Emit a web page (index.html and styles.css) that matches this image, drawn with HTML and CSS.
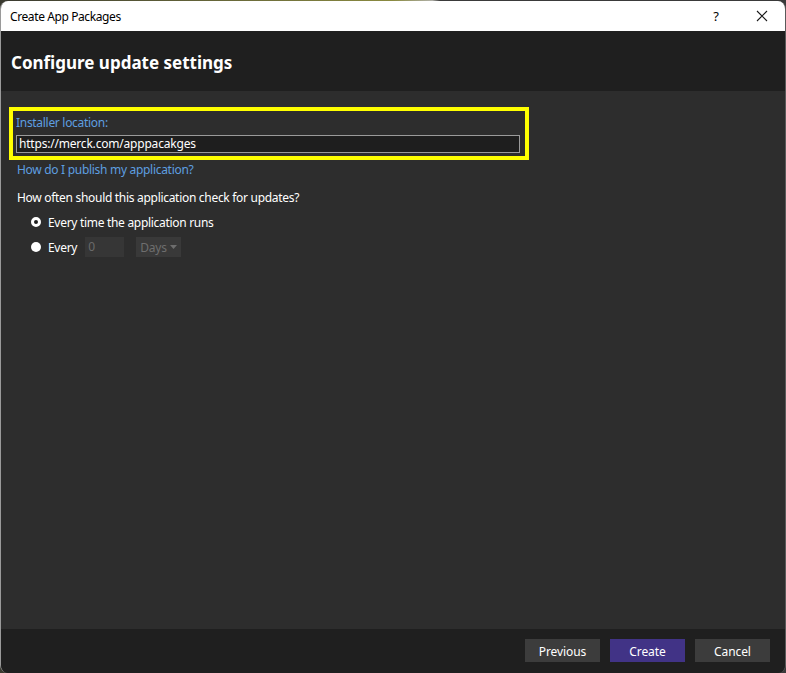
FILE: index.html
```html
<!DOCTYPE html>
<html>
<head>
<meta charset="utf-8">
<link rel="stylesheet" href="styles.css">
</head>
<body>
<div class="window">
  <div class="titlebar">
    <span class="title-text">Create App Packages</span>
    <span class="tb-btn help">?</span>
    <span class="tb-btn close">
      <svg width="12" height="12" viewBox="0 0 12 12"><path d="M1 1 L11 11 M11 1 L1 11" stroke="#1a1a1a" stroke-width="1.1" fill="none"/></svg>
    </span>
  </div>
  <div class="header">
    <h1 class="page-title">Configure update settings</h1>
  </div>
  <div class="content">
    <div class="highlight">
      <div class="label">Installer location:</div>
      <div class="textbox">https://merck.com/apppacakges</div>
    </div>
    <a class="link">How do I publish my application?</a>
    <div class="question">How often should this application check for updates?</div>
    <div class="options">
      <div class="option">
        <span class="radio checked"></span>
        <span class="opt-text">Every time the application runs</span>
      </div>
      <div class="option">
        <span class="radio"></span>
        <span class="opt-text">Every</span>
        <span class="num-box">0</span>
        <span class="dropdown">Days <svg width="7" height="4" viewBox="0 0 7 4"><path d="M0 0 H7 L3.5 4 Z" fill="#6e6e6e"/></svg></span>
      </div>
    </div>
  </div>
  <div class="footer">
    <button class="btn">Previous</button>
    <button class="btn primary">Create</button>
    <button class="btn">Cancel</button>
  </div>
</div>
</body>
</html>
```
FILE: styles.css
```css
html, body {
  margin: 0;
  padding: 0;
}
body {
  width: 786px;
  height: 673px;
  background: linear-gradient(90deg, #3a3a30 0%, #8a8a40 50%, #b0b0a8 55%, #3a3a3a 56%, #3a3a3a 100%);
  font-family: "Segoe UI", "Noto Sans", "Open Sans", sans-serif;
  font-size: 12px;
  overflow: hidden;
}
.window {
  margin-top: 1px;
  width: 786px;
  height: 672px;
  box-sizing: border-box;
  border-left: 1px solid #9a9a9a;
  border-right: 1px solid #5a5a5a;
  border-radius: 8px;
  overflow: hidden;
  display: flex;
  flex-direction: column;
  background: #2d2d2d;
}
.titlebar {
  height: 30px;
  background: #ffffff;
  display: flex;
  align-items: center;
  padding-left: 9px;
  color: #000;
}
.title-text {
  flex: 1;
  font-size: 12px;
  letter-spacing: -0.4px;
}
.tb-btn {
  display: flex;
  align-items: center;
  justify-content: center;
  height: 30px;
}
.help {
  width: 46px;
  font-size: 13px;
}
.close {
  width: 46px;
}
.header {
  height: 60px;
  background: #1f1f1f;
  display: flex;
  align-items: center;
  padding-left: 10px;
}
.page-title {
  margin: 0;
  color: #ffffff;
  font-size: 17px;
  font-weight: bold;
  letter-spacing: 0;
  position: relative;
  top: 1px;
}
.content {
  flex: 1;
  background: #2d2d2d;
  padding: 16px 0 0 8px;
  color: #ffffff;
}
.highlight {
  width: 509px;
  border: 4px solid #ffff00;
  padding: 3px 0 3px 3px;
}
.label {
  color: #5e9fe0;
  line-height: 17px;
  letter-spacing: -0.3px;
}
.textbox {
  margin-top: 4px;
  width: 500px;
  height: 16px;
  line-height: 16px;
  border: 1px solid #9a9a9a;
  background: #1e1e1e;
  padding-left: 2px;
  color: #ffffff;
  letter-spacing: -0.2px;
}
.link {
  display: block;
  margin-left: 8px;
  margin-top: 2px;
  line-height: 16px;
  color: #5e9fe0;
  letter-spacing: -0.3px;
}
.question {
  margin-left: 8px;
  margin-top: 12px;
  line-height: 16px;
  letter-spacing: -0.3px;
}
.options {
  margin-left: 22px;
  margin-top: 6px;
  display: flex;
  flex-direction: column;
  gap: 5px;
}
.option {
  display: flex;
  align-items: center;
  height: 20px;
}
.radio {
  width: 10px;
  height: 10px;
  border-radius: 50%;
  background: #ffffff;
  box-sizing: border-box;
  margin-right: 7px;
}
.radio.checked {
  border: 3px solid #ffffff;
  background: #1e1e1e;
}
.opt-text {
  letter-spacing: -0.3px;
}
.num-box {
  margin-left: 8px;
  width: 36px;
  height: 20px;
  line-height: 20px;
  padding-left: 3px;
  background: #363636;
  color: #6a6a6a;
}
.dropdown {
  margin-left: 12px;
  height: 20px;
  padding-left: 4px;
  background: #393939;
  color: #6e6e6e;
  display: flex;
  align-items: center;
  gap: 3px;
  box-sizing: border-box;
  width: 45px;
  letter-spacing: -0.2px;
}
.footer {
  height: 44px;
  background: #1f1f1f;
  display: flex;
  justify-content: flex-end;
  align-items: flex-start;
  padding-top: 10px;
  padding-right: 15px;
  gap: 10px;
  box-sizing: border-box;
}
.btn {
  width: 75px;
  height: 23px;
  border: none;
  background: #3c3c3c;
  color: #ffffff;
  font-family: inherit;
  font-size: 12px;
  padding: 2px 0 0 0;
  letter-spacing: -0.1px;
}
.btn.primary {
  background: #413386;
}
```
